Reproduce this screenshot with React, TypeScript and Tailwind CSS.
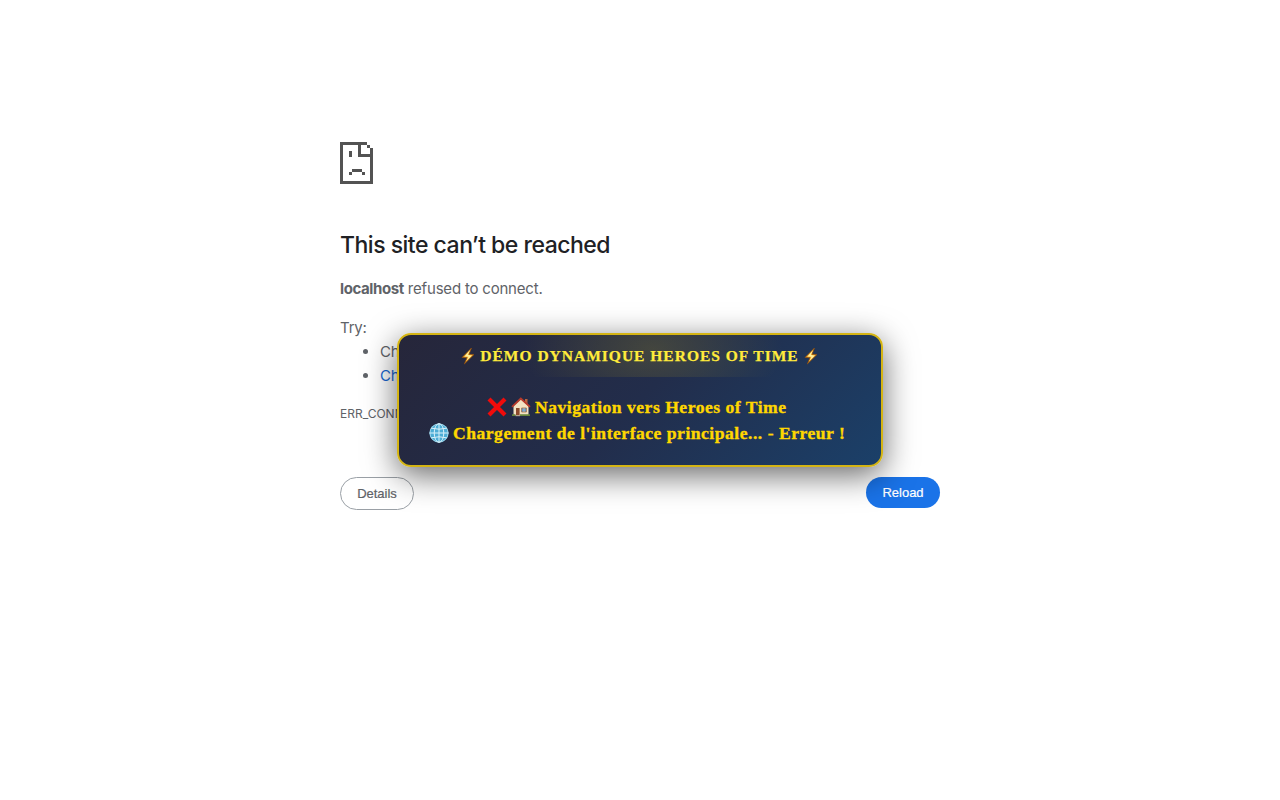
import React from "react";

function SadPage() {
  return (
    <svg width="33" height="42" viewBox="0 0 33 42" shapeRendering="crispEdges" className="block">
      <path
        fill="#535353"
        fillRule="evenodd"
        d="M0 0H27V3H21V12H30V6H33V42H0ZM3 3V39H30V15H18V3ZM27 3H30V6H27ZM9 9H12V15H9ZM12 27H22V30H12ZM9 30H12V33H9ZM22 30H25V33H22Z"
      />
    </svg>
  );
}

function Bolt() {
  return (
    <svg width="16" height="18" viewBox="0 0 16 18" className="block">
      <path d="M11.5 1 2 10.5l5 .2L4.3 17 14 7.5l-5-.2Z" fill="#f5a623" stroke="#8a4b10" strokeWidth=".7" />
      <path d="M10 3 4.5 9.5l4 .2L6.3 14 12 8.4l-4.2-.3Z" fill="#fff3a0" />
    </svg>
  );
}

function Cross() {
  return (
    <svg width="20" height="20" viewBox="0 0 20 20" className="block">
      <path d="m2 2 16 16M18 2 2 18" stroke="#f10b0b" strokeWidth="4.2" />
    </svg>
  );
}

function House() {
  return (
    <svg width="20" height="20" viewBox="0 0 20 20" className="block">
      <path d="M14 2h2.5v6H14Z" fill="#b9643f" />
      <path d="M2.5 9 10 2l7.5 7v9h-15Z" fill="#f4e3c3" />
      <path d="m1 9.8 8.8-8.3L19 9.8" fill="none" stroke="#b83a2b" strokeWidth="1.8" />
      <path d="M5 11h3.6v7H5Z" fill="#8c4a2c" />
      <path d="M10.6 11h4.8v4h-4.8Z" fill="#5e9bd0" stroke="#a56d43" strokeWidth=".8" />
      <path d="M13 11v4" stroke="#ead6b4" strokeWidth=".6" />
      <path d="M1 17.2h3.5V19H1ZM9 17.2h10V19H9Z" fill="#67853c" />
      <path d="M4.5 18h4.6v1.2H4.5Z" fill="#b4a492" />
    </svg>
  );
}

function Globe() {
  return (
    <svg width="20" height="20" viewBox="0 0 20 20" className="block">
      <circle cx="10" cy="10" r="9.6" fill="#4dadd5" />
      <g fill="none" stroke="#d9f1fa" strokeWidth="1">
        <circle cx="10" cy="10" r="9.1" strokeOpacity=".6" />
        <ellipse cx="10" cy="10" rx="4.8" ry="9.4" />
        <path d="M10 .5v19M.5 10h19M2.2 5.2q7.8 2 15.6 0M2.2 14.8q7.8-2 15.6 0" />
      </g>
    </svg>
  );
}

function DemoPanel() {
  return (
    <div className="absolute left-[397px] top-[333px] h-[134px] w-[486px] overflow-visible rounded-[14px] border-2 border-[#d4b414] bg-[linear-gradient(135deg,#26263a_0%,#222d4b_50%,#1b4069_100%)] font-['Liberation_Serif','DejaVu_Serif',serif] font-bold shadow-[0_8px_32px_rgba(0,0,0,0.6)]">
      <div className="absolute left-0 top-0 h-[42px] w-full rounded-t-[12px] bg-[radial-gradient(ellipse_130px_72px_at_254px_14px,rgba(255,215,0,0.15),transparent)]" />
      <div className="relative flex h-[42px] items-center justify-between pl-[61px] pr-[62px] text-[15.5px] text-[#ffeb3b]">
        <Bolt />
        <span className="whitespace-nowrap tracking-[1px] [-webkit-text-stroke:0.25px_#ffeb3b]">DÉMO DYNAMIQUE HEROES OF TIME</span>
        <Bolt />
      </div>
      <div className="relative mt-[17px] text-[17.6px] leading-[26px] text-[#ffd700] [-webkit-text-stroke:0.35px_#ffd700]">
        <div className="flex h-[26px] items-center pl-[88px]">
          <Cross />
          <span className="ml-[4px]"><House /></span>
          <span className="ml-[4px] whitespace-nowrap tracking-[0.5px]">Navigation vers Heroes of Time</span>
        </div>
        <div className="flex h-[26px] items-center pl-[30px]">
          <Globe />
          <span className="ml-[4px] whitespace-nowrap tracking-[0.5px]">Chargement de l'interface principale... - Erreur !</span>
        </div>
      </div>
    </div>
  );
}

export default function App() {
  return (
    <div className="relative h-[800px] w-full overflow-hidden bg-white font-['Inter',sans-serif] text-[15px] leading-6 text-[#5f6368]">
      <main className="mx-auto w-[600px] pt-[142px]">
        <SadPage />
        <h1 className="mt-[47px] whitespace-nowrap text-[23px] font-medium leading-[29px] tracking-[-0.5px] text-[#202124]">This site can’t be reached</h1>
        <p className="mt-[17px] leading-6 tracking-[-0.2px]">
          <strong className="font-bold tracking-[-0.4px]">localhost</strong> refused to connect.
        </p>
        <p className="mt-[15px] tracking-[-0.2px]">Try:</p>
        <ul className="list-disc pl-10 tracking-[-0.2px]">
          <li>Checking the connection</li>
          <li><span className="text-[#1967d2]">Checking the proxy and the firewall</span></li>
        </ul>
        <p className="mt-[16px] text-[12px] leading-[20px]">ERR_CONNECTION_REFUSED</p>
        <div className="mt-[53px] flex items-start justify-between font-['Liberation_Sans',Arial,sans-serif] text-[13px]">
          <button className="h-[33px] w-[74px] rounded-full border border-[#9aa0a6] text-[#5f6368] [-webkit-text-stroke:0.2px_#5f6368]">Details</button>
          <button className="h-[31px] w-[74px] rounded-full bg-[#1a73e8] text-white [-webkit-text-stroke:0.2px_white]">Reload</button>
        </div>
      </main>
      <DemoPanel />
    </div>
  );
}
